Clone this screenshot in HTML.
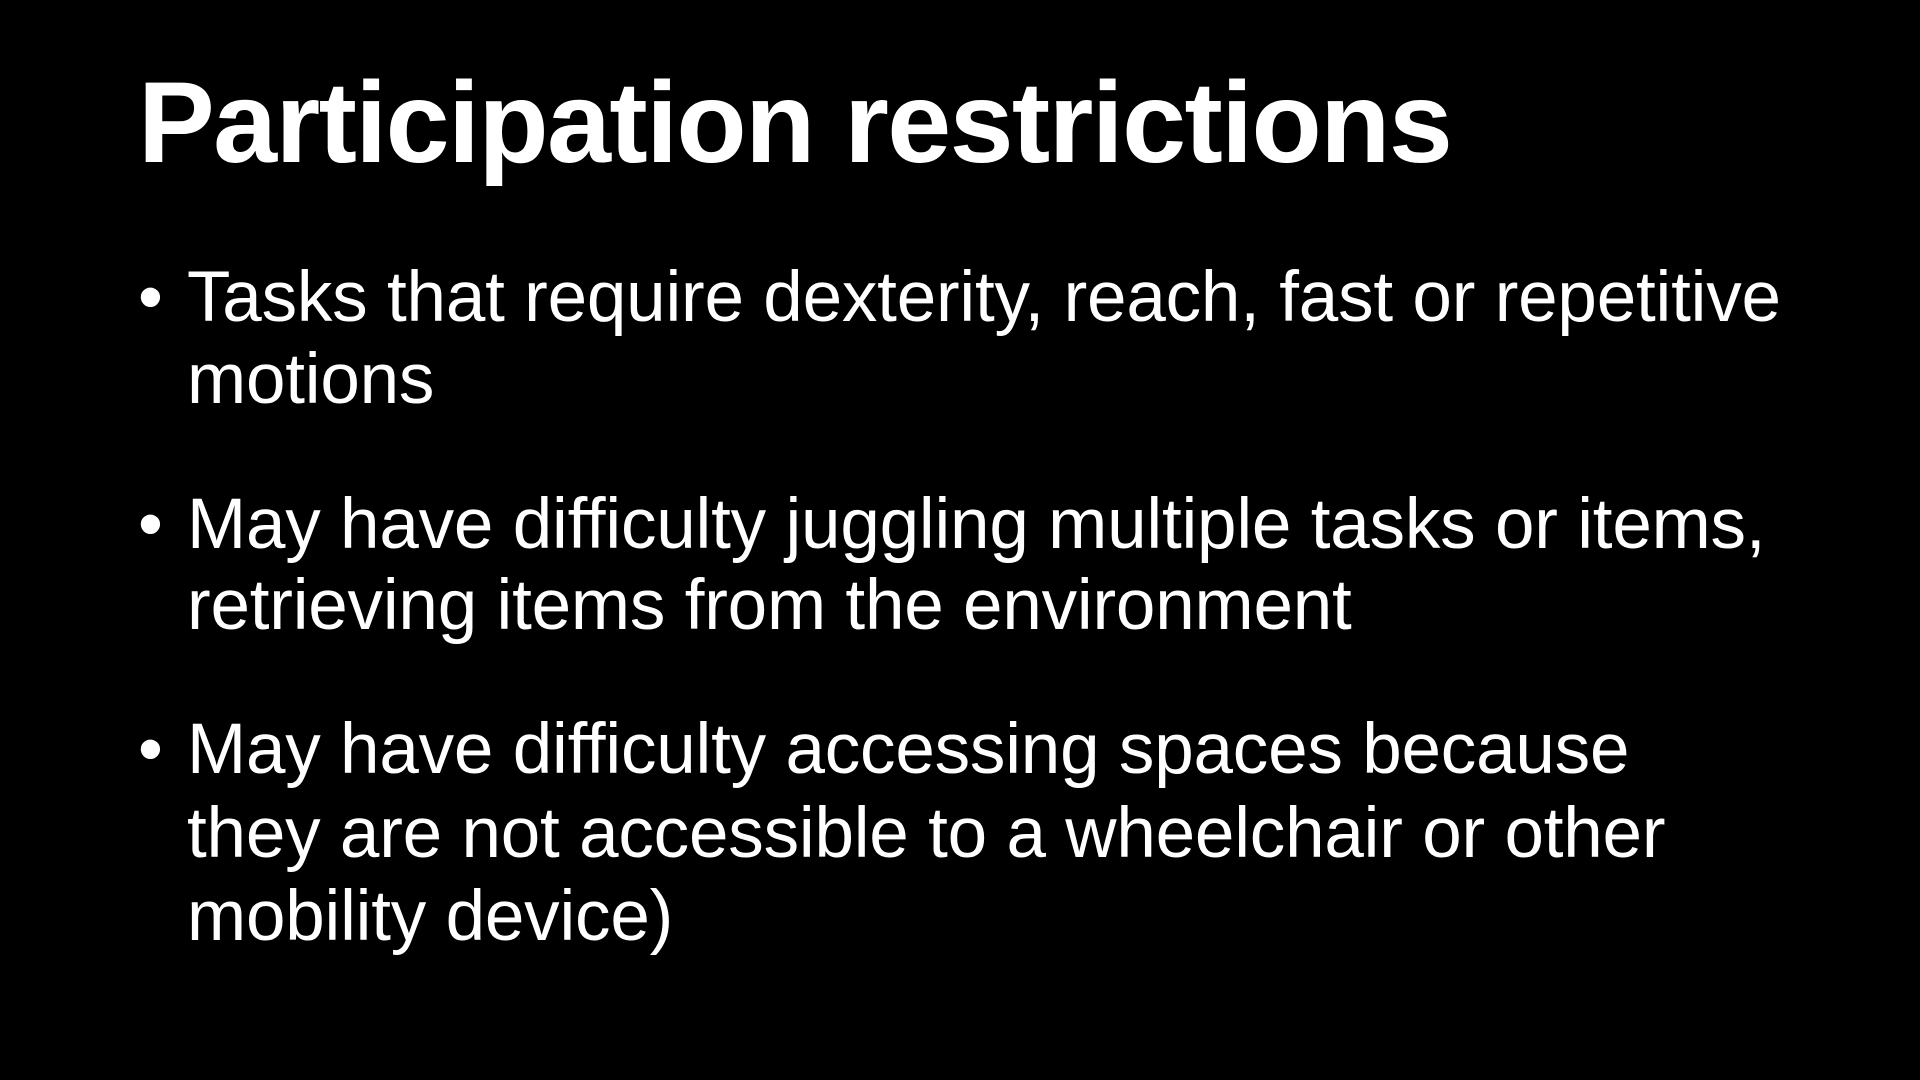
<!DOCTYPE html>
<html><head><meta charset="utf-8"><style>
html,body{margin:0;padding:0;background:#000;width:1920px;height:1080px;overflow:hidden}
body{position:relative;font-family:"Liberation Sans",Arial,sans-serif;color:#fff}
.t{position:absolute;left:138px;top:66px;font-size:115px;line-height:115px;font-weight:bold;white-space:nowrap;letter-spacing:-1.6px}
.l{position:absolute;left:187px;font-size:71px;line-height:82px;white-space:nowrap;letter-spacing:-0.2px}
.b{position:absolute;left:138px;font-size:71px;line-height:82px}
</style></head><body>
<div class="t">Participation restrictions</div>
<div class="b" style="top:257px">•</div>
<div class="l" style="top:257px">Tasks that require dexterity, reach, fast or repetitive</div>
<div class="l" style="top:339px">motions</div>
<div class="b" style="top:484px">•</div>
<div class="l" style="top:484px">May have difficulty juggling multiple tasks or items,</div>
<div class="l" style="top:565px">retrieving items from the environment</div>
<div class="b" style="top:709px">•</div>
<div class="l" style="top:709px">May have difficulty accessing spaces because</div>
<div class="l" style="top:793px">they are not accessible to a wheelchair or other</div>
<div class="l" style="top:876px">mobility device)</div>
</body></html>
